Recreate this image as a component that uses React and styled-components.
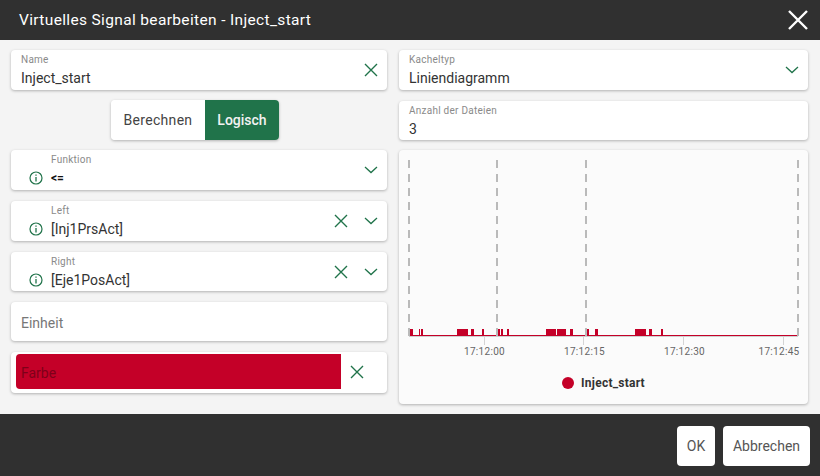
import React from "react";
import styled, { createGlobalStyle } from "styled-components";

const GREEN = "#20734a";
const DARK = "#303030";
const RED = "#c40028";

const GlobalStyle = createGlobalStyle`
  html, body {
    margin: 0;
    padding: 0;
    background: ${DARK};
    font-family: Roboto, "Liberation Sans", sans-serif;
  }
`;

const CloseIcon = ({ size = 16, color = GREEN, width = 1.4 }) => (
  <svg width={size} height={size} viewBox="0 0 16 16" fill="none">
    <path d="M2 2 L14 14 M14 2 L2 14" stroke={color} strokeWidth={width} />
  </svg>
);

const ChevronIcon = () => (
  <svg width="16" height="8" viewBox="0 0 16 8" fill="none">
    <path d="M2 1 L8 6.5 L14 1" stroke={GREEN} strokeWidth="1.3" />
  </svg>
);

const InfoIcon = () => (
  <InfoSvg width="14" height="14" viewBox="0 0 14 14" fill="none">
    <circle cx="7" cy="7" r="6" stroke={GREEN} strokeWidth="1.2" />
    <path d="M7 6 V10.5" stroke={GREEN} strokeWidth="1.3" />
    <path d="M7 3.4 V4.8" stroke={GREEN} strokeWidth="1.3" />
  </InfoSvg>
);

// x range of each red block on the chart, in page px
const pulses = [
  [410, 413], [419, 420], [421, 423], [457, 468], [471, 474], [482, 484], [498, 500], [501, 503], [507, 509],
  [546, 556], [557, 559], [559, 566], [570, 573], [587, 589], [595, 598], [635, 646], [649, 652], [661, 663],
];
const dashes = [409, 497, 586, 798];
const ticks = [
  { x: 484, textX: 484.5, label: "17:12:00" },
  { x: 583, textX: 584.5, label: "17:12:15" },
  { x: 683, textX: 684.5, label: "17:12:30" },
  { x: 783, textX: 779, label: "17:12:45" },
];

const Chart = () => (
  <svg width="409" height="210" viewBox="399 150 409 210">
    {ticks.map((t) => (
      <line key={t.x} x1={t.x + 0.5} x2={t.x + 0.5} y1="336" y2="345" stroke="#d4d4d4" />
    ))}
    <line x1="409" x2="798" y1="336.5" y2="336.5" stroke="#cfcfcf" />
    <line x1="409" x2="798" y1="335.5" y2="335.5" stroke={RED} />
    {pulses.map(([from, to]) => (
      <rect key={from} x={from} y="329" width={to - from} height="7" fill={RED} />
    ))}
    {dashes.map((x) => (
      <line key={x} x1={x} x2={x} y1="160" y2="336" stroke="#bababa" strokeWidth="2" strokeDasharray="8 6" />
    ))}
    {ticks.map((t) => (
      <ChartLabel key={t.label} x={t.textX} y="355" textAnchor="middle">
        {t.label}
      </ChartLabel>
    ))}
  </svg>
);

const App = () => (
  <>
    <GlobalStyle />
    <Dialog>
      <Header>
        <Title>Virtuelles Signal bearbeiten - Inject_start</Title>
        <CloseIcon size={24} color="#fff" width={1.6} />
      </Header>
      <Body>
        <Column>
          <Field>
            <FieldText>
              <Label>Name</Label>
              <Value>Inject_start</Value>
            </FieldText>
            <CloseIcon />
          </Field>
          <Toggle>
            <ToggleButton>Berechnen</ToggleButton>
            <ToggleButton $active>Logisch</ToggleButton>
          </Toggle>
          <Field>
            <InfoIcon />
            <FieldText $indent>
              <Label>Funktion</Label>
              <SmallValue>&lt;=</SmallValue>
            </FieldText>
            <ChevronIcon />
          </Field>
          <Field $nudge>
            <InfoIcon />
            <FieldText $indent>
              <Label>Left</Label>
              <Value>[Inj1PrsAct]</Value>
            </FieldText>
            <Actions>
              <CloseIcon />
              <ChevronIcon />
            </Actions>
          </Field>
          <Field $nudge $h={39}>
            <InfoIcon />
            <FieldText $indent>
              <Label>Right</Label>
              <Value>[Eje1PosAct]</Value>
            </FieldText>
            <Actions>
              <CloseIcon />
              <ChevronIcon />
            </Actions>
          </Field>
          <Field $nudge $h={39}>
            <Placeholder>Einheit</Placeholder>
          </Field>
          <ColorField $nudge $h={41}>
            <Swatch>Farbe</Swatch>
            <CloseIcon />
          </ColorField>
        </Column>
        <Column>
          <Field>
            <FieldText>
              <Label>Kacheltyp</Label>
              <Value>Liniendiagramm</Value>
            </FieldText>
            <ChevronIcon />
          </Field>
          <Field $nudge $h={39}>
            <FieldText>
              <Label>Anzahl der Dateien</Label>
              <Value>3</Value>
            </FieldText>
          </Field>
          <ChartCard>
            <Chart />
            <Legend>
              <LegendDot />
              Inject_start
            </Legend>
          </ChartCard>
        </Column>
      </Body>
      <Footer>
        <FooterButton $w={38}>OK</FooterButton>
        <FooterButton $w={87}>Abbrechen</FooterButton>
      </Footer>
    </Dialog>
  </>
);

export default App;

//Styled components
const Dialog = styled.div`
  width: 820px;
  height: 476px;
  display: flex;
  flex-direction: column;
  overflow: hidden;
`;

const Header = styled.header`
  height: 40px;
  background: ${DARK};
  display: flex;
  align-items: center;
  justify-content: space-between;
  padding: 0 10.5px 0 19px;
`;

const Title = styled.h1`
  margin: 0;
  font-size: 15.5px;
  font-weight: 400;
  letter-spacing: 0.35px;
  color: #fff;
`;

const Body = styled.main`
  height: 374px;
  box-sizing: border-box;
  background: #f4f4f4;
  padding: 10px 12px 0 11px;
  display: grid;
  grid-template-columns: 376px 409px;
  column-gap: 12px;
`;

const Column = styled.div`
  display: flex;
  flex-direction: column;
  gap: 10px;
`;

const Field = styled.div`
  height: ${(p) => p.$h || 40}px;
  margin-top: ${(p) => (p.$nudge ? "1px" : "0")};
  box-sizing: border-box;
  background: #fff;
  border-radius: 4px;
  box-shadow: 0 1px 3px rgba(0, 0, 0, 0.28);
  display: flex;
  align-items: center;
  padding: 0 8.5px 0 10px;
`;

const InfoSvg = styled.svg`
  margin: 16px 0 0 8px;
  flex-shrink: 0;
`;

const FieldText = styled.div`
  flex: 1;
  min-width: 0;
  align-self: flex-start;
  padding: 4px 0 0 ${(p) => (p.$indent ? "8px" : "0")};
`;

const Label = styled.div`
  font-size: 10px;
  line-height: 12px;
  letter-spacing: 0.25px;
  color: #8a8a8a;
`;

const Value = styled.div`
  margin-top: 2px;
  font-size: 14px;
  line-height: 20px;
  color: #333;
`;

const SmallValue = styled.div`
  margin-top: 2px;
  font-size: 12px;
  line-height: 20px;
  font-weight: 700;
  color: #111;
`;

const Placeholder = styled.span`
  padding-top: 3px;
  font-size: 14px;
  color: #777;
`;

const Actions = styled.div`
  display: flex;
  align-items: center;
  gap: 14px;
`;

const Toggle = styled.div`
  align-self: center;
  margin-right: 8px;
  display: flex;
  height: 40px;
  border-radius: 4px;
  overflow: hidden;
  box-shadow: 0 1px 3px rgba(0, 0, 0, 0.28);
`;

const ToggleButton = styled.div`
  width: ${(p) => (p.$active ? "74px" : "94px")};
  display: flex;
  align-items: center;
  justify-content: center;
  font-size: 14px;
  letter-spacing: ${(p) => (p.$active ? "0" : "0.3px")};
  font-weight: ${(p) => (p.$active ? 500 : 400)};
  background: ${(p) => (p.$active ? GREEN : "#fff")};
  color: ${(p) => (p.$active ? "#f2f2f2" : "#444")};
`;

const ColorField = styled(Field)`
  padding: 2px 22.5px 4px 5px;
  gap: 7.5px;
`;

const Swatch = styled.div`
  flex: 1;
  height: 35px;
  background: ${RED};
  border-radius: 4px 0 0 4px;
  color: #7e0019;
  font-size: 14px;
  line-height: 38px;
  padding-left: 5px;
`;

const ChartCard = styled.div`
  height: 254px;
  background: #fbfbfb;
  border-radius: 4px;
  box-shadow: 0 1px 3px rgba(0, 0, 0, 0.28);
  display: flex;
  flex-direction: column;
  overflow: hidden;
`;

const ChartLabel = styled.text`
  font-family: Roboto, "Liberation Sans", sans-serif;
  font-size: 10px;
  letter-spacing: 0.3px;
  fill: #666;
`;

const Legend = styled.div`
  display: flex;
  align-items: center;
  justify-content: center;
  gap: 7px;
  margin-top: 16px;
  font-size: 12px;
  font-weight: 700;
  letter-spacing: 0.25px;
  color: #333;
`;

const LegendDot = styled.span`
  width: 12px;
  height: 12px;
  border-radius: 50%;
  background: ${RED};
`;

const Footer = styled.footer`
  flex: 1;
  background: ${DARK};
  display: flex;
  justify-content: flex-end;
  align-items: flex-start;
  gap: 8px;
  padding: 12px 10px 0 0;
`;

const FooterButton = styled.div`
  width: ${(p) => p.$w}px;
  height: 40px;
  background: #fff;
  border-radius: 4px;
  display: flex;
  align-items: center;
  justify-content: center;
  font-size: 14px;
  color: #555;
`;
